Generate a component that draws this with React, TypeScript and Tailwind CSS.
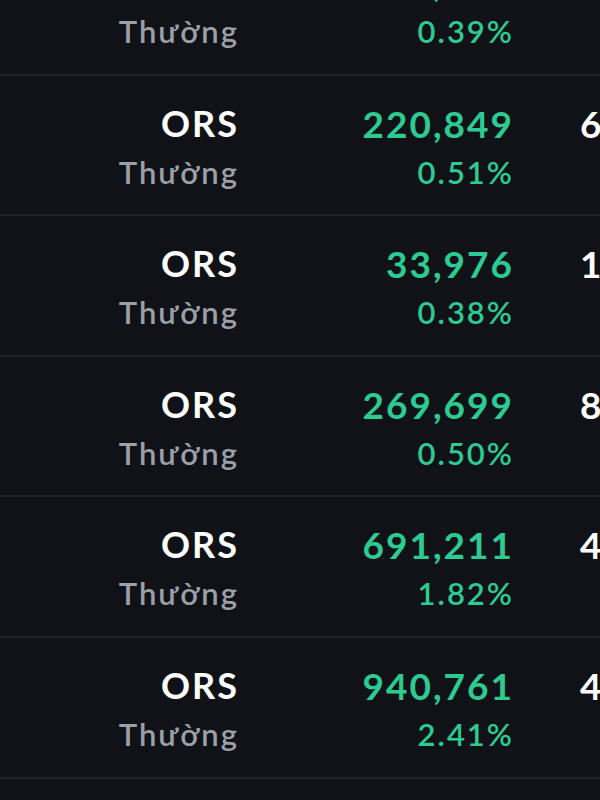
import React from "react";

type Row = { code: string; type: string; amount: string; pct: string; extra: string };

const rows: Row[] = [
    { code: "ORS", type: "Thường", amount: "85,112", pct: "0.39%", extra: "2" },
    { code: "ORS", type: "Thường", amount: "220,849", pct: "0.51%", extra: "6" },
    { code: "ORS", type: "Thường", amount: "33,976", pct: "0.38%", extra: "1" },
    { code: "ORS", type: "Thường", amount: "269,699", pct: "0.50%", extra: "8" },
    { code: "ORS", type: "Thường", amount: "691,211", pct: "1.82%", extra: "4" },
    { code: "ORS", type: "Thường", amount: "940,761", pct: "2.41%", extra: "4" },
    { code: "ORS", type: "Thường", amount: "512,380", pct: "1.30%", extra: "3" },
];

function TradeRow({ row }: { row: Row }) {
    return (
        <div className="h-[140.6px] box-border border-b-2 border-[#1f2128] flex pt-[26px]">
            <div className="w-[239px] text-right flex-shrink-0">
                <p className="text-[36px] leading-[43px] tracking-[2px] font-bold text-white">{row.code}</p>
                <p className="text-[31px] leading-[37px] tracking-[2px] mt-[9px] font-semibold text-[#9b9fa8]">{row.type}</p>
            </div>
            <div className="w-[275px] text-right flex-shrink-0">
                <p className="text-[37px] leading-[43px] tracking-[2px] font-bold text-[#2ccb91]">{row.amount}</p>
                <p className="text-[31px] leading-[37px] tracking-[2px] mt-[9px] font-semibold text-[#2ccb91]">{row.pct}</p>
            </div>
            <div className="ml-[66px] whitespace-nowrap">
                <p className="text-[37px] leading-[43px] tracking-[2px] font-bold text-white">{row.extra}2,500</p>
            </div>
        </div>
    );
}

export default function App() {
    return (
        <div
            className="w-[600px] h-[800px] overflow-hidden bg-[#101217]"
            style={{ fontFamily: "Lato, 'Noto Sans', sans-serif" }}
        >
            <div className="-mt-[65px]">
                {rows.map((r, i) => (
                    <TradeRow key={i} row={r} />
                ))}
            </div>
        </div>
    );
}
